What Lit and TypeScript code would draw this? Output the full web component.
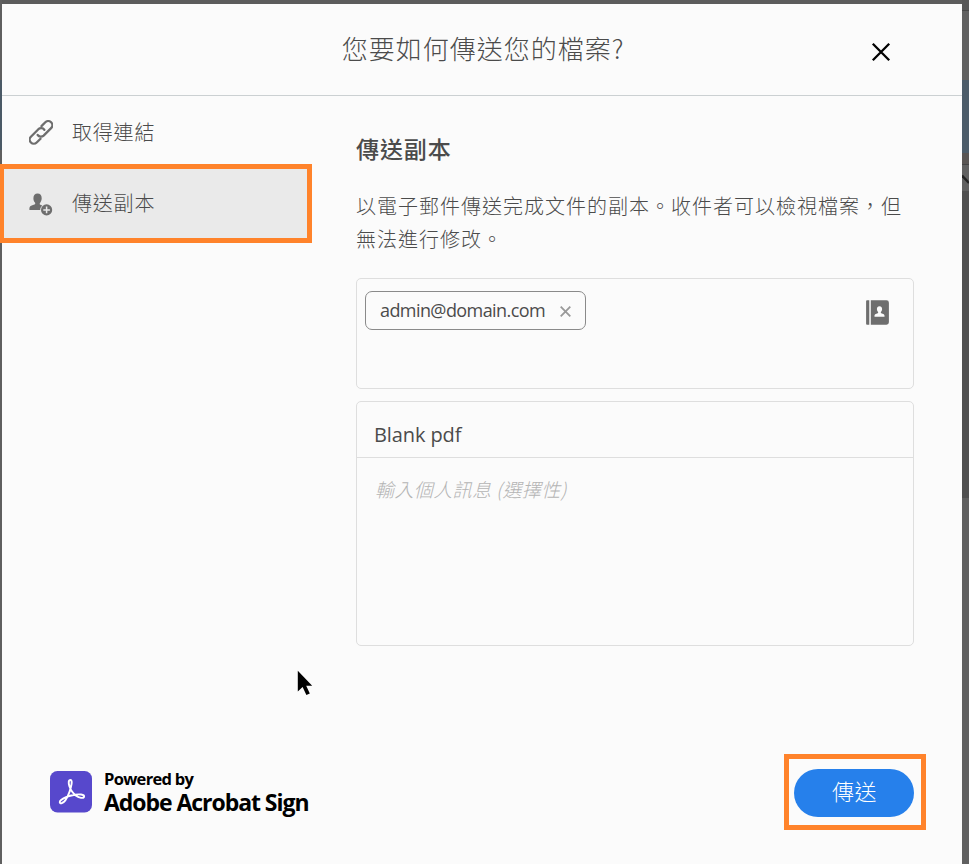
import { LitElement, html, css, svg } from "lit";
import { customElement } from "lit/decorators.js";

const closeIcon = svg`<svg width="20" height="20" viewBox="0 0 20 20"><path d="M1.8 1.8 18.2 18.2M18.2 1.8 1.8 18.2" stroke="#000" stroke-width="2.3" fill="none"/></svg>`;

const linkIcon = svg`<svg width="24" height="25" viewBox="0 0 24 25">
  <g transform="translate(12 12.4) rotate(-45)" fill="none" stroke="#6e6e6e" stroke-width="2.300" stroke-linecap="round">
    <path d="M4.800 -4.100H10.200a4.100 4.100 0 0 1 0 8.200H-.4a4.100 4.100 0 0 1 -3.800 -4.600"/>
    <path d="M-4.800 4.100H-10.200a4.100 4.100 0 0 1 0 -8.200H.4a4.100 4.100 0 0 1 3.800 4.600"/>
  </g>
</svg>`;

const personIcon = svg`<svg width="24" height="23" viewBox="0 0 24 23">
  <path fill="#6e6e6e" d="M8.6 .5c2.7 0 4.1 2.1 4.1 4.7 0 1.9-.7 3.5-1.7 4.7-.5.6-.4 1.5.4 1.9l1.8.7a6.6 6.6 0 0 0-2 4.6H.4v-1.7c0-1.8 1.300-2.500 2.900-3.100l2.100-.8c.9-.4 1.100-1.200.5-2C5 8.500 4.400 7 4.400 5.200 4.400 2.500 5.900.5 8.600.5z"/>
  <circle cx="17.600" cy="16.900" r="5.600" fill="#6e6e6e"/>
  <path d="M17.600 13.600v6.600M14.300 16.900h6.600" stroke="#eaeaea" stroke-width="1.500"/>
</svg>`;

const bookIcon = svg`<svg width="23" height="25" viewBox="0 0 23 25">
  <path fill="#6e6e6e" d="M1 .3h2.300v24.400H1a.9.9 0 0 1-.9-.9V1.200A.9.9 0 0 1 1 .3zM4.800.3h15.700a2.400 2.400 0 0 1 2.400 2.400v19.600a2.400 2.400 0 0 1-2.400 2.400H4.800z"/>
  <path fill="#fbfbfb" d="M13.500 6.200c1.700 0 2.600 1.200 2.600 2.800 0 1.200-.5 2.200-1.100 2.900-.4.500-.2 1.100.3 1.300l1.900.7c.9.300 1.300.9 1.300 1.800v1.100h-10v-1.100c0-.9.400-1.500 1.300-1.800l1.900-.7c.5-.2.7-.8.300-1.300-.6-.7-1.100-1.700-1.100-2.900 0-1.600.9-2.800 2.600-2.800z"/>
</svg>`;

const acrobatIcon = svg`<svg width="42" height="42" viewBox="0 0 42 42">
  <rect width="42" height="41.500" rx="7.500" fill="#5748cc"/>
  <path d="M20.500 9c-2.200 0-2.100 3.200-1.100 6.200 1.200 3.700 3.500 7 6.700 9.500 3 2.200 7.700 3.200 8 .9.300-2.300-5-2.600-9.500-1.800-5 .9-10.300 2.600-13.500 5.300-2 1.700-1.700 3.500.4 3.200 2.900-.5 6-6.100 8-11.500 1.600-4.500 3.500-11.800 1-11.800z" fill="none" stroke="#fff" stroke-width="1.900"/>
</svg>`;

const cursorIcon = svg`<svg width="16" height="26" viewBox="0 0 16 26"><path d="M.8.8V21.500L5.600 17 9.400 25 12.800 23.500 9.200 15.800H15.200z"/></svg>`;

@customElement("app-root")
export class AppRoot extends LitElement {
  static styles = css`
    :host {
      display: flex;
      position: relative;
      box-sizing: border-box;
      height: 864px;
      overflow: hidden;
      font-family: "Noto Sans", "Noto Sans CJK TC", sans-serif;
      color: #4b4b4b;
    }
    svg { display: block; flex: none; }
    .edge-left {
      width: 2px;
      background: linear-gradient(#5f5f5f 0 80px, #4a5966 80px 150px, #5f5f5f 150px);
    }
    .edge-right {
      width: 7px;
      background: linear-gradient(#585858 0 10px, #484848 10px 11px, #616161 11px 80px, #4c5c69 80px 153px, #595553 153px 164px, #444 164px 165px, #606060 165px 191px, #505050 191px 498px, #606060 498px);
    }
    .notch { display: block; margin-top: 174px; }
    .dialog {
      flex: 1;
      border-top: 4px solid #5c5c5c;
      background: #fbfbfb;
      display: flex;
      flex-direction: column;
    }
    .header {
      height: 91px;
      flex: none;
      border-bottom: 1px solid #cbd0d2;
      display: grid;
      grid-template-columns: 1fr auto 1fr;
      align-items: center;
    }
    .title {
      grid-column: 2;
      margin: 0 0 4px 2px;
      font: 300 26px/40px "Noto Sans CJK TC", "Noto Sans", sans-serif;
      letter-spacing: 1px;
    }
    .close { justify-self: end; margin: 4px 71px 0 0; }
    .body { flex: 1; display: flex; }
    .side { width: 310px; display: flex; flex-direction: column; }
    .item {
      box-sizing: border-box;
      height: 68px;
      padding: 4px 0 0 27px;
      display: flex;
      align-items: center;
      gap: 19px;
      font: 300 20px/28px "Noto Sans CJK TC", sans-serif;
      letter-spacing: 0.800px;
    }
    .item.active {
      height: 79px;
      margin-left: -3px;
      padding: 0 0 0 25px;
      border: 5px solid #ff832b;
      background: #eaeaea;
    }
    .item.active span { margin-top: -1px; }
    .item.active svg { margin-top: 1px; }
    .brand {
      margin: auto 0 49px 48px;
      display: flex;
      align-items: flex-start;
      gap: 12px;
      color: #000;
      font-family: "Open Sans", "Noto Sans", sans-serif;
      font-weight: 700;
      white-space: nowrap;
    }
    .brand svg { margin-top: 2px; }
    .powered { font-size: 16.500px; line-height: 20px; letter-spacing: -0.700px; }
    .product { font-size: 23px; line-height: 26px; letter-spacing: -1.050px; }
    .main {
      width: 558px;
      margin-left: 44px;
      display: flex;
      flex-direction: column;
    }
    .heading {
      margin: 34px 0 0;
      font: 500 23px/36px "Noto Sans CJK TC", sans-serif;
      letter-spacing: 0.900px;
    }
    .lead {
      margin: 23px 0 0;
      font: 300 20px/33px "Noto Sans CJK TC", sans-serif;
      letter-spacing: 1px;
      white-space: nowrap;
    }
    .box { box-sizing: border-box; border: 1px solid #dedede; border-radius: 5px; }
    .to {
      height: 111px;
      margin-top: 23px;
      padding: 12px 24px 0 8px;
      display: flex;
      justify-content: space-between;
      align-items: flex-start;
    }
    .to > svg { margin-top: 9px; }
    .chip {
      box-sizing: border-box;
      width: 221px;
      height: 39px;
      border: 1px solid #8a8a8a;
      border-radius: 7px;
      padding: 0 14px;
      display: flex;
      align-items: center;
      justify-content: space-between;
      font-family: "Open Sans", sans-serif;
      font-size: 18px;
      letter-spacing: -0.580px;
      line-height: 30px;
    }
    .addr { margin-top: -2px; }
    .chip svg { margin-top: 2px; }
    .message { height: 245px; margin-top: 12px; }
    .subject {
      height: 50px;
      border-bottom: 1px solid #dedede;
      padding: 5px 17px 0;
      font-family: "Open Sans", sans-serif;
      font-size: 20px;
      letter-spacing: -0.100px;
      line-height: 55px;
    }
    .note {
      padding: 16px 18px;
      font: italic 300 19px/30px "Noto Sans CJK TC", sans-serif;
      letter-spacing: 0.400px;
      color: #b4b4b4;
    }
    .send-frame {
      align-self: flex-end;
      box-sizing: border-box;
      width: 142px;
      height: 76px;
      margin: 108px -12px 0 0;
      border: 5px solid #ff832b;
      padding: 10px 7px 8px 5px;
      display: flex;
    }
    .send {
      flex: 1;
      border: 0;
      border-radius: 24px;
      padding: 0 0 7px 1px;
      background: #2680eb;
      color: #fff;
      font: 300 22px/32px "Noto Sans CJK TC", sans-serif;
      letter-spacing: 0.500px;
    }
    .pointer { position: absolute; left: 297px; top: 670px; }
  `;

  render() {
    return html`
      <div class="edge-left"></div>
      <div class="dialog" lang="zh-TW">
        <header class="header">
          <h1 class="title">您要如何傳送您的檔案?</h1>
          <span class="close">${closeIcon}</span>
        </header>
        <div class="body">
          <nav class="side">
            <div class="item">${linkIcon}<span>取得連結</span></div>
            <div class="item active">${personIcon}<span>傳送副本</span></div>
            <div class="brand">
              ${acrobatIcon}
              <div>
                <div class="powered">Powered by</div>
                <div class="product">Adobe Acrobat Sign</div>
              </div>
            </div>
          </nav>
          <main class="main">
            <h2 class="heading">傳送副本</h2>
            <p class="lead">以電子郵件傳送完成文件的副本。收件者可以檢視檔案，但<br />無法進行修改。</p>
            <div class="box to">
              <div class="chip">
                <span class="addr">admin@domain.com</span>
                <svg width="11" height="11" viewBox="0 0 11 11"><path d="M.7.7 10.300 10.300M10.300.7.7 10.300" stroke="#999" stroke-width="1.800" /></svg>
              </div>
              ${bookIcon}
            </div>
            <div class="box message">
              <div class="subject">Blank pdf</div>
              <div class="note">輸入個人訊息 (選擇性)</div>
            </div>
            <div class="send-frame"><button class="send">傳送</button></div>
          </main>
        </div>
      </div>
      <div class="edge-right">
        <svg class="notch" width="7" height="12" viewBox="0 0 7 12"><path d="M0 1.500 7 9" stroke="#222" stroke-width="2.500" /></svg>
      </div>
      <span class="pointer">${cursorIcon}</span>
    `;
  }
}
